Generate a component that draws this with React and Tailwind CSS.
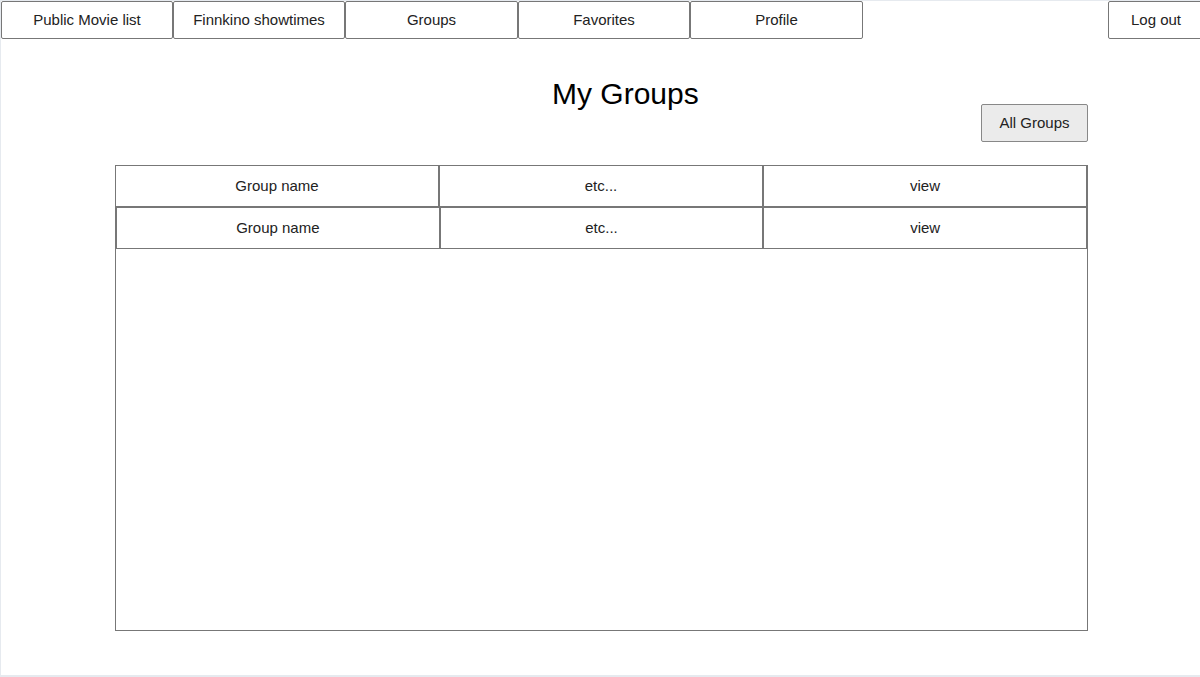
const NAV = [
  { label: "Public Movie list", w: "w-[172px]" },
  { label: "Finnkino showtimes", w: "w-[172px]" },
  { label: "Groups", w: "w-[173px]" },
  { label: "Favorites", w: "w-[172px]" },
  { label: "Profile", w: "w-[173px]" },
];

const ROWS = [
  ["Group name", "etc...", "view"],
  ["Group name", "etc...", "view"],
];

export default function App() {
  return (
    <div
      className="w-[1200px] h-[677px] overflow-hidden bg-white border-l border-t border-b-2 border-[#e6eaef] text-[#222]"
      style={{ fontFamily: '"Liberation Sans", Arial, sans-serif' }}
    >
      {/* Top nav */}
      <div className="flex items-start">
        <div className="flex">
          {NAV.map(({ label, w }) => (
            <button
              key={label}
              className={`${w} h-[38px] border border-[#777] rounded-[2px] bg-white text-[15px] flex items-center justify-center`}
            >
              {label}
            </button>
          ))}
        </div>
        <button className="ml-auto -mr-[4px] w-[96px] h-[38px] border border-[#777] rounded-[2px] bg-white text-[15px] flex items-center justify-center">
          Log out
        </button>
      </div>

      {/* Content */}
      <div className="ml-[114px] w-[973px]">
        <div className="flex items-start">
          <h1 className="ml-[437px] mt-[38px] text-[30px] leading-[34px] text-black">My Groups</h1>
          <button className="ml-auto mt-[65px] w-[107px] h-[38px] border border-[#888] rounded-[2px] bg-[#ebebeb] text-[15px] flex items-center justify-center">
            All Groups
          </button>
        </div>

        <div className="mt-[23px] h-[466px] border border-[#777]">
          {ROWS.map((row, i) => (
            <div key={i} className={`flex ${i === 0 ? "-ml-px -mt-px" : ""}`}>
              {row.map((cell, j) => (
                <div
                  key={j}
                  className="w-[324px] h-[42px] border border-[#777] flex items-center justify-center text-[15px]"
                >
                  {cell}
                </div>
              ))}
            </div>
          ))}
        </div>
      </div>
    </div>
  );
}
